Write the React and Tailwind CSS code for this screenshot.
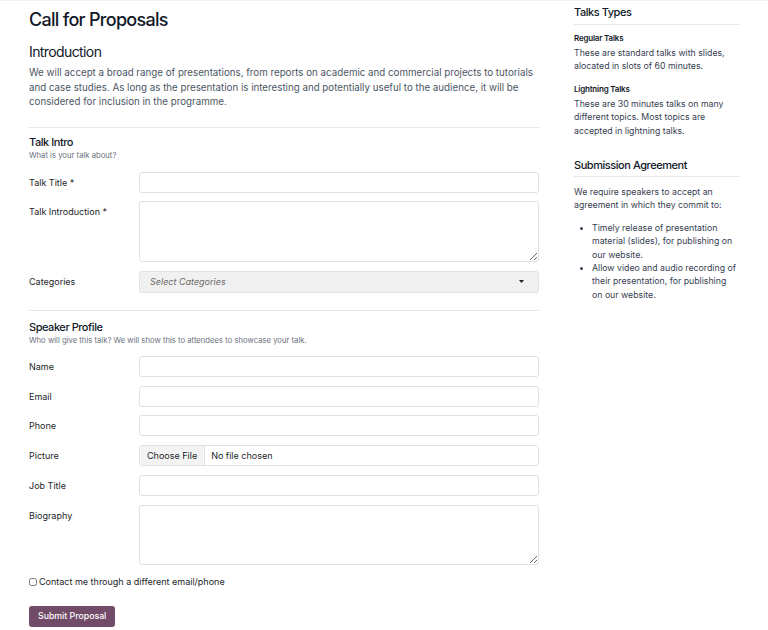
import React from 'react';

const font = { fontFamily: 'Inter, "Noto Sans", sans-serif' };

const Field = ({ label, children }) => (
  <div className="flex">
    <label className="w-[110px] shrink-0 text-[9px] text-[#212529] leading-[21px]">{label}</label>
    <div className="flex-1">{children}</div>
  </div>
);

const TextInput = () => (
  <input type="text" className="block w-full h-[21px] rounded-[3px] border border-[#dee2e6] bg-white px-[6px] text-[9px] outline-none" />
);

const TextArea = ({ h }) => (
  <textarea className={`block w-full ${h} rounded-[3px] border border-[#dee2e6] bg-white px-[6px] py-[4px] text-[9px] outline-none`} />
);

const SectionHead = ({ title, sub }) => (
  <div>
    <h3 className="text-[11px] leading-[15px] font-medium tracking-[-0.45px] text-[#111827]">{title}</h3>
    <p className="mt-[1px] text-[7.7px] leading-[10px] text-[#6b7280]">{sub}</p>
  </div>
);

export default function App() {
  return (
    <div style={font} className="min-h-[630px] bg-white border-t border-[#f1f1f1]">
      <div className="flex gap-[35px] px-[29px]">
        {/* main form column */}
        <div className="w-[510px] shrink-0 pt-[7px] pb-[6px]">
          <h1 className="text-[18px] leading-[24px] font-medium tracking-[-0.7px] text-[#111827]">Call for Proposals</h1>
          <h2 className="mt-[11px] text-[14px] leading-[18px] font-normal tracking-[-0.6px] text-[#111827]">Introduction</h2>
          <p className="mt-[5px] text-[9.75px] leading-[14.6px] text-[#4b5563]">
            We will accept a broad range of presentations, from reports on academic and commercial projects to tutorials
            and case studies. As long as the presentation is interesting and potentially useful to the audience, it will be
            considered for inclusion in the programme.
          </p>

          <div className="mt-[17px] border-t border-[#e5e7eb] pt-[7px]">
            <SectionHead title="Talk Intro" sub="What is your talk about?" />
            <div className="mt-[11px] flex flex-col gap-[8.5px]">
              <Field label="Talk Title *"><TextInput /></Field>
              <Field label="Talk Introduction *"><TextArea h="h-[61px]" /></Field>
              <Field label="Categories">
                <div className="flex h-[22px] items-center justify-between rounded-[3px] border border-[#e2e2e2] bg-[#f0f0f0] pl-[10px] pr-[14px]">
                  <span className="text-[9px] italic text-[#6b6b6b]">Select Categories</span>
                  <svg width="5" height="3" viewBox="0 0 5 3"><path d="M0 0h5L2.5 3z" fill="#222" /></svg>
                </div>
              </Field>
            </div>
          </div>

          <div className="mt-[17px] border-t border-[#e5e7eb] pt-[9px]">
            <SectionHead title="Speaker Profile" sub="Who will give this talk? We will show this to attendees to showcase your talk." />
            <div className="mt-[10px] flex flex-col gap-[8.8px]">
              <Field label="Name"><TextInput /></Field>
              <Field label="Email"><TextInput /></Field>
              <Field label="Phone"><TextInput /></Field>
              <Field label="Picture">
                <div className="flex h-[21px] items-stretch overflow-hidden rounded-[3px] border border-[#dee2e6] bg-white text-[9px] text-[#212529]">
                  <span className="flex items-center border-r border-[#dee2e6] bg-[#f3f3f3] px-[7px]">Choose File</span>
                  <span className="flex items-center pl-[6px]">No file chosen</span>
                </div>
              </Field>
              <Field label="Job Title"><TextInput /></Field>
              <Field label="Biography"><TextArea h="h-[60px]" /></Field>
            </div>
          </div>

          <label className="mt-[10px] flex items-center gap-[2px] text-[9px] leading-[14px] text-[#212529]">
            <input type="checkbox" className="m-0 h-[8px] w-[8px]" />
            Contact me through a different email/phone
          </label>

          <button className="mt-[17px] h-[21px] rounded-[3px] bg-[#714b67] px-[9px] text-[8.75px] font-medium text-white">
            Submit Proposal
          </button>
        </div>

        {/* sidebar */}
        <div className="w-[165px] shrink-0 pt-[4px] text-[8.75px] leading-[13.4px] text-[#374151]">
          <h4 className="border-b border-[#e5e7eb] pb-[4px] text-[11px] leading-[15px] font-medium tracking-[-0.45px] text-[#111827]">Talks Types</h4>
          <h5 className="mt-[7px] text-[8px] leading-[12px] font-semibold tracking-[-0.2px] text-[#111827]">Regular Talks</h5>
          <p className="mt-[3px]">These are standard talks with slides, alocated in slots of 60 minutes.</p>
          <h5 className="mt-[9px] text-[8px] leading-[12px] font-semibold tracking-[-0.2px] text-[#111827]">Lightning Talks</h5>
          <p className="mt-[3px]">These are 30 minutes talks on many different topics. Most topics are accepted in lightning talks.</p>

          <h4 className="mt-[20px] border-b border-[#e5e7eb] pb-[3px] text-[11px] leading-[15px] font-medium tracking-[-0.45px] text-[#111827]">Submission Agreement</h4>
          <p className="mt-[9px]">We require speakers to accept an agreement in which they commit to:</p>
          <ul className="mt-[9px] list-disc pl-[18px]">
            <li>Timely release of presentation material (slides), for publishing on our website.</li>
            <li>Allow video and audio recording of their presentation, for publishing on our website.</li>
          </ul>
        </div>
      </div>
    </div>
  );
}
